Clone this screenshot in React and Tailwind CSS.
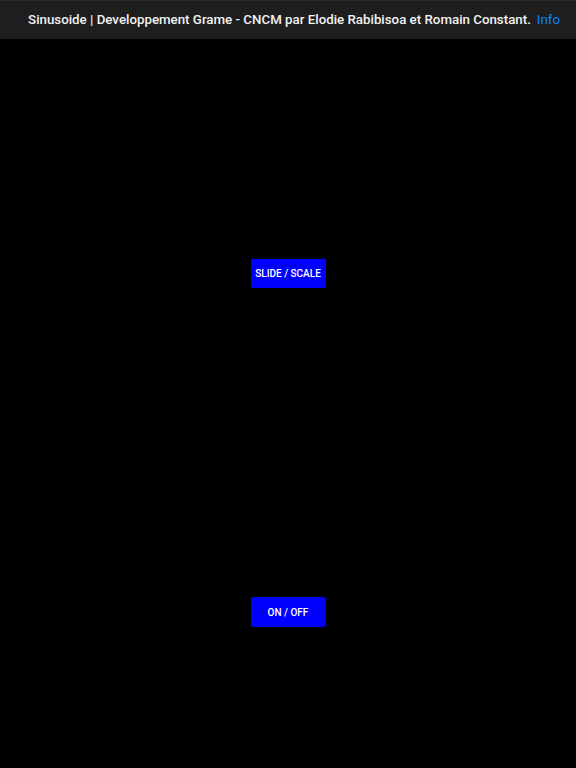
export default function App() {
  return (
    <div className="min-h-[768px] w-full bg-black flex flex-col" style={{ fontFamily: "Roboto, 'Liberation Sans', Arial, sans-serif" }}>
      <div className="h-[39px] bg-[#1e1e1e] border-t border-[#2c2c2c] flex items-center justify-end pr-[16px] gap-[6px] text-[13.3px] whitespace-nowrap">
        <span className="text-[#f2f2f2] font-medium">Sinusoide | Developpement Grame - CNCM par Elodie Rabibisoa et Romain Constant.</span>
        <span className="text-[#0a84ff]">Info</span>
      </div>
      <div className="flex flex-col items-center">
        <button className="mt-[220px] w-[75px] h-[29px] rounded-[2px] bg-[#0000ff] text-white text-[10px] font-medium">
          SLIDE / SCALE
        </button>
        <button className="mt-[309px] w-[75px] h-[30px] rounded-[2px] bg-[#0000ff] text-white text-[10px] font-medium">
          ON / OFF
        </button>
      </div>
    </div>
  );
}
